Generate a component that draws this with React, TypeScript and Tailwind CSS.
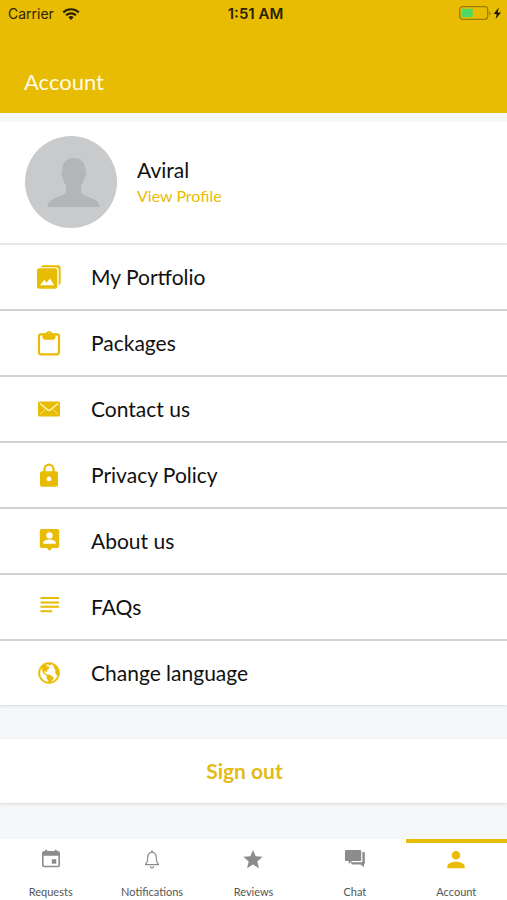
import React from 'react';
import { IoIosNotificationsOutline, IoMdGlobe, IoMdPerson } from 'react-icons/io';
import { MdStar } from 'react-icons/md';

interface IconProps {
  className?: string;
}

interface LinkItem {
  label: string;
  icon: React.ComponentType<IconProps>;
}

const PhotosIcon: React.FC<IconProps> = ({ className }) => (
  <svg className={className} viewBox="0 0 26 26" fill="currentColor" aria-hidden="true">
    <path d="M5 3.200C5.400 1.800 6.200 1.300 7.500 1.300H22a2.600 2.600 0 0 1 2.600 2.600v14.500c0 1.500-.6 2.400-1.900 2.800V6a2.800 2.800 0 0 0-2.800-2.800z" />
    <path
      fillRule="evenodd"
      d="M3.500 4.300h15.300a2.500 2.500 0 0 1 2.500 2.500v15.400a2.500 2.500 0 0 1-2.500 2.500H3.500A2.500 2.500 0 0 1 1 22.200V6.800a2.500 2.500 0 0 1 2.500-2.500zM4 21.200h14.300l-4.500-6.700-3.200 4.200-2.400-2.700z"
    />
  </svg>
);

const ClipboardIcon: React.FC<IconProps> = ({ className }) => (
  <svg className={className} viewBox="0 0 26 26" aria-hidden="true">
    <rect x="3" y="4.300" width="20" height="20" rx="2" fill="none" stroke="currentColor" strokeWidth="2.200" />
    <path
      fill="currentColor"
      fillRule="evenodd"
      d="M6.500 3.500h3a3.700 3.700 0 0 1 7 0h3v3.200a3 3 0 0 1-3 3h-7a3 3 0 0 1-3-3zM13 2.700a1.200 1.200 0 1 0 0 2.400 1.200 1.200 0 0 0 0-2.400z"
    />
  </svg>
);

const MailIcon: React.FC<IconProps> = ({ className }) => (
  <svg className={className} viewBox="0 0 26 26" aria-hidden="true">
    <rect x="2" y="5.500" width="22" height="15" rx="1.500" fill="currentColor" />
    <path
      d="m4 7.500 7.500 6.300a2.300 2.300 0 0 0 3 0L22 7.500"
      fill="none"
      stroke="#fff3bf"
      strokeWidth="1.400"
    />
    <path d="m4 18.500 5-5M22 18.500l-5-5" fill="none" stroke="#fff3bf" strokeWidth="0.700" />
  </svg>
);

const LockIcon: React.FC<IconProps> = ({ className }) => (
  <svg className={className} viewBox="0 0 26 26" fill="currentColor" aria-hidden="true">
    <path d="M8.500 10V7.200a4.500 4.500 0 0 1 9 0V10" fill="none" stroke="currentColor" strokeWidth="2.300" />
    <path
      fillRule="evenodd"
      d="M6 9.200h14a2 2 0 0 1 2 2v11.500a2 2 0 0 1-2 2H6a2 2 0 0 1-2-2V11.200a2 2 0 0 1 2-2zM13 14.500a2.400 2.400 0 1 0 0 4.800 2.400 2.400 0 0 0 0-4.800z"
    />
  </svg>
);

const PersonPinIcon: React.FC<IconProps> = ({ className }) => (
  <svg className={className} viewBox="0 0 26 26" fill="currentColor" aria-hidden="true">
    <path
      fillRule="evenodd"
      d="M5.800 1h15.400a2 2 0 0 1 2 2v15a2 2 0 0 1-2 2h-5L13.500 23l-2.700-3h-5a2 2 0 0 1-2-2V3a2 2 0 0 1 2-2zM13.500 4.200a3.200 3.200 0 1 0 0 6.400 3.200 3.200 0 0 0 0-6.400zM7.200 15.800h12.600v-1c0-2.200-4.200-3.300-6.300-3.300s-6.300 1.100-6.300 3.300z"
    />
  </svg>
);

const LinesIcon: React.FC<IconProps> = ({ className }) => (
  <svg className={className} viewBox="0 0 26 26" aria-hidden="true">
    <path
      d="M4.500 4H23M4.500 8.400H23M4.500 12.800H23M4.500 17.200h11.700"
      fill="none"
      stroke="currentColor"
      strokeWidth="2"
    />
  </svg>
);

const GlobeIcon: React.FC<IconProps> = ({ className }) => (
  <IoMdGlobe className={className} stroke="currentColor" strokeWidth={9} />
);

const CalendarIcon: React.FC<IconProps> = ({ className }) => (
  <svg className={className} viewBox="0 0 24 24" fill="currentColor" aria-hidden="true">
    <path
      fillRule="evenodd"
      d="M6 1.700h2V3h8V1.700h2V3h1.200a2.200 2.200 0 0 1 2.200 2.200V18a2.200 2.200 0 0 1-2.200 2.200H4.800A2.200 2.200 0 0 1 2.600 18V5.200A2.200 2.200 0 0 1 4.800 3H6zM4.300 8v9.700c0 .5.300.8.800.8h13.800c.5 0 .8-.3.800-.8V8z"
    />
    <path d="M12.800 11.700h4.700v4.700h-4.700z" />
  </svg>
);

const ChatIcon: React.FC<IconProps> = ({ className }) => (
  <svg className={className} viewBox="0 0 24 24" fill="currentColor" aria-hidden="true">
    <path d="M2.500 2h15c.6 0 1 .4 1 1v9.500c0 .6-.4 1-1 1H9L5.500 16.800v-3.300h-3c-.6 0-1-.4-1-1V3c0-.6.400-1 1-1z" />
    <path d="M19.700 4.300h1.600c.6 0 1 .4 1 1v11c0 .6-.4 1-1 1v2.900l-3.500-2.900H9c-.6 0-1-.4-1-1v-1.500h10.700c.6 0 1-.4 1-1z" />
  </svg>
);

const menuItems: LinkItem[] = [
  { label: 'My Portfolio', icon: PhotosIcon },
  { label: 'Packages', icon: ClipboardIcon },
  { label: 'Contact us', icon: MailIcon },
  { label: 'Privacy Policy', icon: LockIcon },
  { label: 'About us', icon: PersonPinIcon },
  { label: 'FAQs', icon: LinesIcon },
  { label: 'Change language', icon: GlobeIcon },
];

const tabs: LinkItem[] = [
  { label: 'Requests', icon: CalendarIcon },
  { label: 'Notifications', icon: IoIosNotificationsOutline },
  { label: 'Reviews', icon: MdStar },
  { label: 'Chat', icon: ChatIcon },
  { label: 'Account', icon: IoMdPerson },
];

const StatusBar: React.FC = () => (
  <div className="grid grid-cols-3 items-center h-7 pl-2 pr-1 font-[Inter,sans-serif] text-sm text-[#2b2300]">
    <div className="flex items-center gap-2">
      <span>Carrier</span>
      <svg className="w-[18px] h-3" viewBox="0 0 18 12" fill="none" aria-hidden="true">
        <path d="M1.200 4.400a11.200 11.200 0 0 1 15.600 0" stroke="currentColor" strokeWidth="2.200" />
        <path d="M4 7.300a7.200 7.200 0 0 1 10 0" stroke="currentColor" strokeWidth="2.200" />
        <path d="M9 12 6.300 9.300a3.900 3.900 0 0 1 5.400 0z" fill="currentColor" />
      </svg>
    </div>
    <span className="text-center text-[15px] font-semibold">1:51 AM</span>
    <div className="flex items-center justify-end">
      <svg className="w-11 h-4" viewBox="0 0 44 16" aria-hidden="true">
        <rect x="0.700" y="0.700" width="28" height="12.600" rx="3" fill="none" stroke="#9a7d08" strokeWidth="1.300" />
        <rect x="2.700" y="2.700" width="11" height="8.600" rx="1" fill="#4cd964" />
        <path d="M30.300 5c1.600.6 1.600 4 0 4.600z" fill="#9a7d08" />
        <path d="M39.800 1.600 34.600 8h3.200l-1.200 5 5.400-6.600h-3.400z" fill="#1a1500" />
      </svg>
    </div>
  </div>
);

const Avatar: React.FC = () => (
  <svg className="w-23 h-23 shrink-0" viewBox="0 0 92 92" aria-hidden="true">
    <circle cx="46" cy="46" r="46" fill="#c8cacc" />
    <path
      d="M49 22c7.500 0 11.500 5 11.300 12.500 1.500.5 1 5.500-1 7.500-.6 3-1.800 5.500-3.300 7.500v5.500c0 3 3.500 4.500 9 6.500 6 2.200 9.500 4 9.500 9.500H22.500c0-5.500 3.500-7.300 9.500-9.500 5.500-2 9-3.500 9-6.500v-5.500c-1.500-2-2.400-4.500-3-7.500-1.800-2-2.300-7-.8-7.500C37 27 41.500 22 49 22z"
      fill="#b3b5b8"
    />
  </svg>
);

const App: React.FC = () => {
  return (
    <div className="min-h-screen flex flex-col bg-[#f5f7f9] font-[Lato,sans-serif] text-[#111111]">
      <header className="bg-[#e8bc03]">
        <StatusBar />
        <h1 className="px-6 pt-[39px] pb-[17px] text-[22px] leading-[29px] text-[#fffbe6]">
          Account
        </h1>
      </header>

      <main className="flex-1 pt-[9px]">
        <section className="flex items-center gap-5 bg-white pl-[25px] pr-6 pt-3.5 pb-[15px] border-b-2 border-[#e9e9ea]">
          <Avatar />
          <div>
            <h2 className="text-[21px] leading-7">Aviral</h2>
            <a href="#profile" className="block text-base leading-6 text-[#e8bc03]">
              View Profile
            </a>
          </div>
        </section>

        {/* Settings menu */}
        <ul className="bg-white divide-y-2 divide-[#d2d2d2] shadow-sm">
          {menuItems.map(({ label, icon: Icon }) => (
            <li key={label}>
              <a href="#menu" className="flex items-center h-16 px-9">
                <Icon className="w-[26px] h-[26px] text-[#e8bc03]" />
                <span className="ml-[29px] text-[21px] leading-7">{label}</span>
              </a>
            </li>
          ))}
        </ul>

        <button
          type="button"
          className="block w-full h-16 mt-[34px] mb-[35px] pr-[18px] bg-white shadow-sm text-[21px] leading-7 font-bold text-[#e3ba16]"
        >
          Sign out
        </button>
      </main>

      {/* Bottom tabs */}
      <nav className="grid grid-cols-5 bg-white">
        {tabs.map(({ label, icon: Icon }) => {
          const active = label === 'Account';
          return (
            <a
              key={label}
              href="#tab"
              className={`flex flex-col items-center h-[61px] border-t-4 pt-[5px] ${
                active ? 'border-[#e8bc03]' : 'border-white'
              }`}
            >
              <Icon className={`w-6 h-6 ${active ? 'text-[#e8bc03]' : 'text-[#8c8c8c]'}`} />
              <span className="mt-[13px] text-[11px] leading-4 text-[#555555]">{label}</span>
            </a>
          );
        })}
      </nav>
    </div>
  );
};

export default App;
